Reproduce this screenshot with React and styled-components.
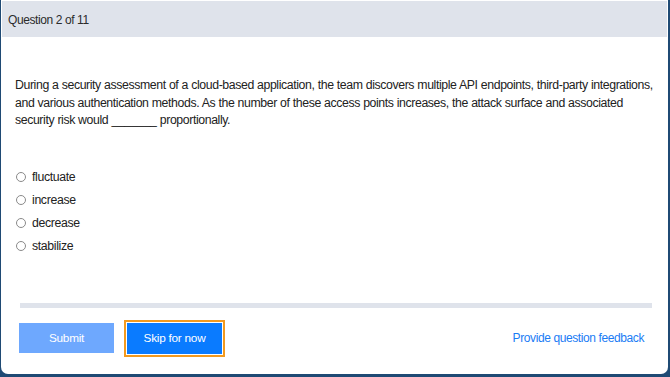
import React, { useState } from "react";
import styled, { createGlobalStyle } from "styled-components";

const GlobalStyle = createGlobalStyle`
  html, body {
    margin: 0;
    padding: 0;
    background: #1f4a74;
  }
  body {
    font-family: "Liberation Sans", Arial, sans-serif;
    color: #222;
  }
`;

const Page = styled.div`
  width: 670px;
  height: 377px;
  padding: 0 2px 3px 1px;
  box-sizing: border-box;
`;

const Card = styled.div`
  height: 100%;
  background: #fff;
  border-radius: 0 0 7px 7px;
  padding: 1px 1px 0 1px;
  box-sizing: border-box;
  display: flex;
  flex-direction: column;
`;

const Header = styled.div`
  height: 36px;
  background: #dfe3eb;
  display: flex;
  align-items: center;
  padding-left: 6px;
  padding-top: 1px;
  box-sizing: border-box;
  font-size: 12px;
  letter-spacing: -0.4px;
  color: #2b2b2b;
`;

const Body = styled.div`
  padding: 40px 2px 0 13px;
  display: flex;
  flex-direction: column;
  flex: 1;
`;

const Prompt = styled.p`
  margin: 0;
  width: 648px;
  font-size: 12.3px;
  letter-spacing: -0.4px;
  word-spacing: 0.2px;
  line-height: 17.5px;
  color: #222;
`;

const Options = styled.div`
  margin-top: 39px;
  display: flex;
  flex-direction: column;
  gap: 6px;
`;

const Option = styled.label`
  display: flex;
  align-items: center;
  height: 17px;
  padding-left: 1px;
  font-size: 12.3px;
  letter-spacing: -0.35px;
  color: #222;
  cursor: pointer;
`;

const Radio = styled.span`
  width: 8px;
  height: 8px;
  border: 1px solid ${(p) => (p.$checked ? "#0a7bff" : "#8a8a8a")};
  border-radius: 50%;
  margin-right: 6px;
  background: ${(p) => (p.$checked ? "radial-gradient(#0a7bff 40%, #fff 45%)" : "#fff")};
`;

const Progress = styled.div`
  margin: 48px 13px 0 5px;
  height: 5px;
  background: #dfe3eb;
`;

const Footer = styled.div`
  display: flex;
  align-items: center;
  margin: 12px 21px 0 4px;
`;

const Button = styled.button`
  width: 95px;
  height: ${(p) => p.$h}px;
  border: none;
  padding: 0;
  font-family: inherit;
  font-size: 11.8px;
  letter-spacing: -0.25px;
  color: #fff;
  background: ${(p) => (p.disabled ? "#6ea8fe" : "#0a7bff")};
  cursor: ${(p) => (p.disabled ? "default" : "pointer")};
`;

const FocusRing = styled.div`
  margin-left: 10px;
  padding: 1px;
  border: 2px solid #f39a1f;
  display: flex;
`;

const FeedbackLink = styled.a`
  margin-left: auto;
  font-size: 12px;
  letter-spacing: -0.4px;
  color: #1a7cf5;
  text-decoration: none;
  cursor: pointer;
`;

const choices = ["fluctuate", "increase", "decrease", "stabilize"];

export default function App() {
  const [picked, setPicked] = useState(null);

  return (
    <>
      <GlobalStyle />
      <Page>
        <Card>
          <Header>Question 2 of 11</Header>
          <Body>
            <Prompt>
              During a security assessment of a cloud-based application, the team discovers multiple API endpoints,
              third-party integrations, and various authentication methods. As the number of these access points
              increases, the attack surface and associated security risk would _______ proportionally.
            </Prompt>
            <Options>
              {choices.map((c) => (
                <Option key={c} onClick={() => setPicked(c)}>
                  <Radio $checked={picked === c} />
                  {c}
                </Option>
              ))}
            </Options>
            <Progress />
            <Footer>
              <Button $h={30} disabled={!picked}>Submit</Button>
              <FocusRing>
                <Button $h={31}>Skip for now</Button>
              </FocusRing>
              <FeedbackLink>Provide question feedback</FeedbackLink>
            </Footer>
          </Body>
        </Card>
      </Page>
    </>
  );
}
